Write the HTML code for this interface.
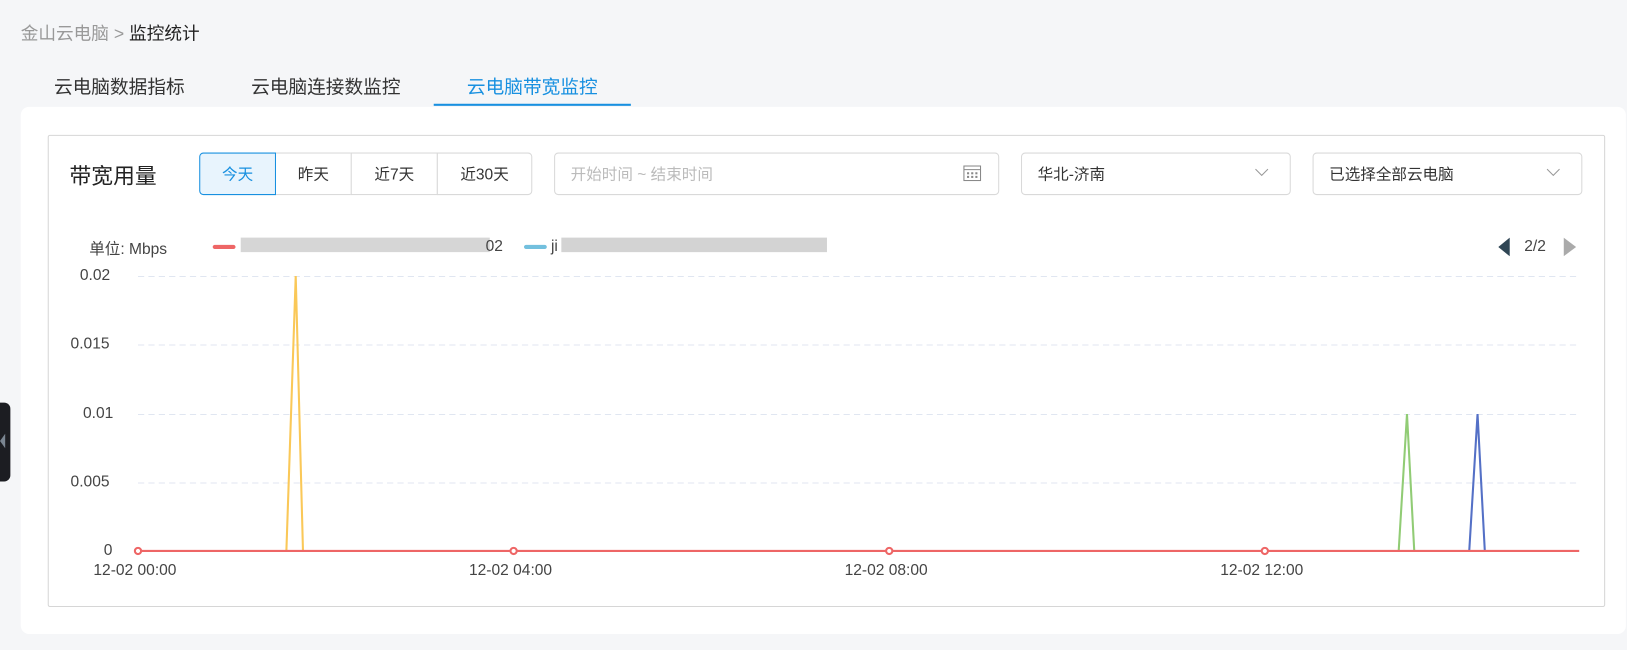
<!DOCTYPE html>
<html><head><meta charset="utf-8"><style>
*{margin:0;padding:0;box-sizing:border-box}
body{width:1627px;height:649px;background:#f5f6f8;font-family:"Liberation Sans","Noto Sans CJK SC",sans-serif;position:relative;overflow:hidden;color:#333}
#w{position:absolute;left:0;top:0;width:1568px;height:626px;transform:scale(1.0376);transform-origin:0 0}
.abs{position:absolute}
.bc{left:20px;top:18px;font-size:17px;color:#999}
.bc b{font-weight:normal;color:#222}
.tab{top:70px;font-size:18px;color:#333}
.card{left:20px;top:103px;width:1547px;height:508px;background:#fff;border-radius:8px}
.box{left:46px;top:130px;width:1501px;height:455px;border:1px solid #d6d6d6;border-radius:2px;background:#fff}
.seg{top:147px;height:41px;border:1px solid #d9d9d9;font-size:15px;display:flex;align-items:center;justify-content:center;color:#333;background:#fff}
.inp{top:147px;height:41px;border:1px solid #d9d9d9;border-radius:4px;font-size:15px;display:flex;align-items:center;padding-left:15px;background:#fff}
.ax{font-size:15px;color:#444}
</style></head><body><div id="w">
<div class="abs bc">金山云电脑 &gt; <b>监控统计</b></div>
<div class="abs tab" style="left:52px">云电脑数据指标</div>
<div class="abs tab" style="left:242px">云电脑连接数监控</div>
<div class="abs tab" style="left:450px;color:#1890e0">云电脑带宽监控</div>
<div class="abs" style="left:418px;top:100px;width:190px;height:2px;background:#1890e0"></div>
<div class="abs card"></div>
<div class="abs box"></div>
<div class="abs" style="left:0;top:388px;width:10px;height:76px;background:#1c1d22;border-radius:0 6px 6px 0"></div>
<div class="abs" style="left:0;top:418px;width:0;height:0;border-top:7px solid transparent;border-bottom:7px solid transparent;border-right:5px solid #7a8591"></div>
<div class="abs" style="left:67px;top:154px;font-size:21px;color:#222">带宽用量</div>
<div class="abs seg" style="left:192px;width:74px;border-color:#1890e0;background:#e8f4fd;color:#1890e0;border-radius:4px 0 0 4px;z-index:2">今天</div>
<div class="abs seg" style="left:265px;width:74px">昨天</div>
<div class="abs seg" style="left:338px;width:84px">近7天</div>
<div class="abs seg" style="left:421px;width:92px;border-radius:0 4px 4px 0">近30天</div>
<div class="abs inp" style="left:534px;width:429px;color:#bbb">开始时间 ~ 结束时间
<svg class="abs" style="right:16px;top:11px" width="18" height="16" viewBox="0 0 18 16"><rect x="1" y="1" width="16" height="14" fill="none" stroke="#888"/><line x1="1" y1="4.5" x2="17" y2="4.5" stroke="#888"/><g fill="#888"><rect x="4" y="7" width="2" height="2"/><rect x="8" y="7" width="2" height="2"/><rect x="12" y="7" width="2" height="2"/><rect x="4" y="10.5" width="2" height="2"/><rect x="8" y="10.5" width="2" height="2"/><rect x="12" y="10.5" width="2" height="2"/></g></svg></div>
<div class="abs inp" style="left:984px;width:260px;color:#333">华北-济南<svg class="abs" style="right:20px;top:14px" width="14" height="9"><path d="M1 1l6 6 6-6" fill="none" stroke="#999"/></svg></div>
<div class="abs inp" style="left:1265px;width:260px;color:#333">已选择全部云电脑<svg class="abs" style="right:20px;top:14px" width="14" height="9"><path d="M1 1l6 6 6-6" fill="none" stroke="#999"/></svg></div>
<div class="abs ax" style="left:86px;top:229px">单位: Mbps</div>
<div class="abs" style="left:205px;top:236px;width:22px;height:4px;background:#ee6666;border-radius:2px"></div>
<div class="abs" style="left:232px;top:229px;width:240px;height:14px;background:#ccc;opacity:.8"></div>
<div class="abs ax" style="left:468px;top:229px">02</div>
<div class="abs" style="left:505px;top:236px;width:22px;height:4px;background:#73c0de;border-radius:2px"></div>
<div class="abs ax" style="left:531px;top:229px">ji</div>
<div class="abs" style="left:541px;top:229px;width:256px;height:14px;background:#c8c8c8;opacity:.8"></div>
<svg class="abs" style="left:1444px;top:229px" width="12" height="18"><path d="M11 0v18L0 9z" fill="#2f4554"/></svg>
<div class="abs ax" style="left:1469px;top:229px">2/2</div>
<svg class="abs" style="left:1507px;top:229px" width="12" height="18"><path d="M0 0v18L12 9z" fill="#aaa"/></svg>
<div class="abs ax" style="left:77px;top:257px">0.02</div>
<div class="abs ax" style="left:68px;top:323px">0.015</div>
<div class="abs ax" style="left:80px;top:390px">0.01</div>
<div class="abs ax" style="left:68px;top:456px">0.005</div>
<div class="abs ax" style="left:100px;top:522px">0</div>
<div class="abs ax" style="left:90px;top:541px">12-02 00:00</div>
<div class="abs ax" style="left:452px;top:541px">12-02 04:00</div>
<div class="abs ax" style="left:814px;top:541px">12-02 08:00</div>
<div class="abs ax" style="left:1176px;top:541px">12-02 12:00</div>
<svg class="abs" style="left:0;top:0" width="1568" height="626">
<g stroke="#e0e6f1" stroke-dasharray="6 4"><line x1="133" y1="266.5" x2="1522" y2="266.5"/><line x1="133" y1="332.5" x2="1522" y2="332.5"/><line x1="133" y1="399.5" x2="1522" y2="399.5"/><line x1="133" y1="465.5" x2="1522" y2="465.5"/></g>
<polyline points="276,531 285,266 292,531" fill="none" stroke="#fac858" stroke-width="2"/>
<polyline points="1348,531 1356,399 1363,531" fill="none" stroke="#91cc75" stroke-width="2"/>
<polyline points="1416,531 1424,399 1431,531" fill="none" stroke="#5470c6" stroke-width="2"/>
<line x1="133" y1="531" x2="1522" y2="531" stroke="#ee6666" stroke-width="2"/>
<g fill="#fff" stroke="#ee6666" stroke-width="2"><circle cx="133" cy="531" r="3"/><circle cx="495" cy="531" r="3"/><circle cx="857" cy="531" r="3"/><circle cx="1219" cy="531" r="3"/></g>
</svg>
</div></body></html>
